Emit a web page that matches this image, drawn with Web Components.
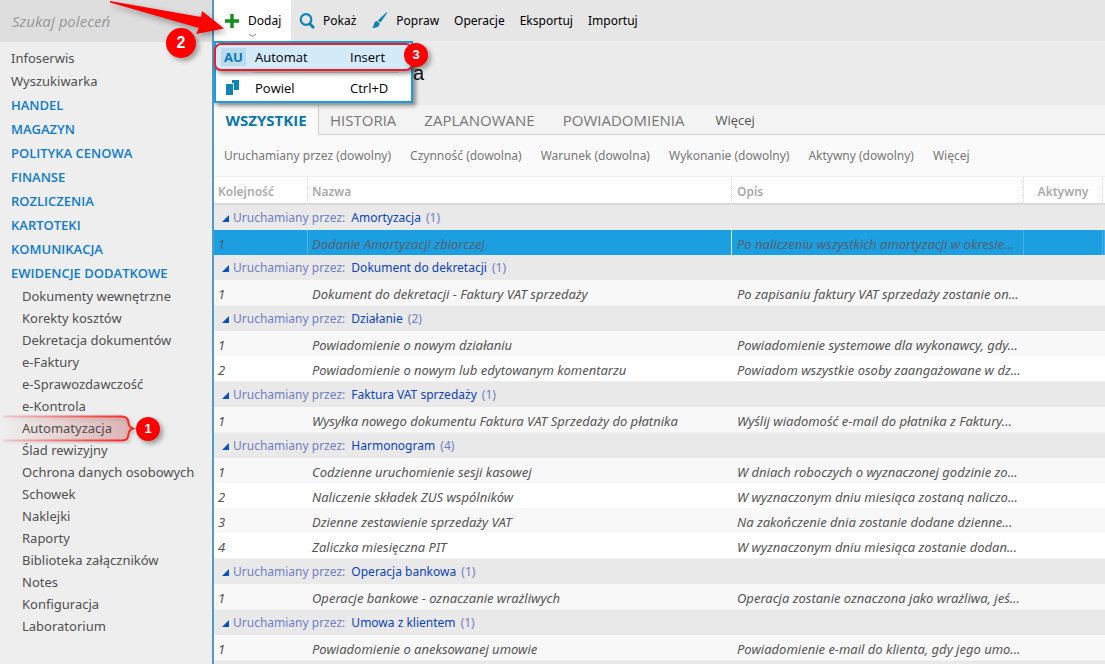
<!DOCTYPE html>
<html lang="pl">
<head>
<meta charset="utf-8">
<title>Automatyzacja</title>
<style>
html,body{margin:0;height:100%}
body{font:13px/20px "Noto Sans","Open Sans",sans-serif;color:#505050;overflow:hidden;background:#ececec}
</style>
</head>
<body>
<app-shell></app-shell>
<script>
class Base extends HTMLElement{
  constructor(){super();this.attachShadow({mode:'open'}).innerHTML=this.render();}
  render(){return '';}
}

customElements.define('step-badge',class extends Base{
  render(){return `<style>
  :host{display:flex;align-items:center;justify-content:center;position:absolute;z-index:6;width:24px;height:24px;border-radius:50%;background:#f00;color:#fff;font:bold 13px/14px "Liberation Sans",sans-serif;box-shadow:3px 3px 5px rgba(0,0,0,.35)}
  :host([large]){width:30px;height:30px;font-size:16px}
  </style><slot></slot>`;}
});

customElements.define('side-nav',class extends Base{
  render(){
    const link=(c,t)=>`<a class="${c}" href="#">${t}</a>`;
    const cats=['HANDEL','MAGAZYN','POLITYKA CENOWA','FINANSE','ROZLICZENIA','KARTOTEKI','KOMUNIKACJA','EWIDENCJE DODATKOWE'];
    const subs=['Dokumenty wewnętrzne','Korekty kosztów','Dekretacja dokumentów','e-Faktury','e-Sprawozdawczość','e-Kontrola','Automatyzacja','Ślad rewizyjny','Ochrona danych osobowych','Schowek','Naklejki','Raporty','Biblioteka załączników','Notes','Konfiguracja','Laboratorium'];
    return `<style>
    :host{display:block;background:#eee;border-right:2px solid #4f9bc9;overflow:hidden}
    input{display:block;box-sizing:border-box;width:100%;height:42px;border:0;border-radius:0;outline:0;padding:0 12px;background:#dedede;font:italic 15px/20px "Noto Sans",sans-serif}
    input::placeholder{color:#9b9b9b;opacity:1}
    nav{display:flex;flex-direction:column;padding-top:5px}
    a{text-decoration:none;white-space:nowrap;padding-left:11px;color:#505050}
    .top{line-height:23px}
    .cat{line-height:24px;font-family:"Open Sans",sans-serif;font-weight:600;color:#0e7bd0}
    .sub{line-height:22px;padding-left:22px}
    .marked{position:relative}
    .marked svg{position:absolute;left:0;top:-3px}
    .marked span{position:relative}
    .marked step-badge{left:136px;top:0}
    </style>
    <input type="text" placeholder="Szukaj poleceń" aria-label="Szukaj poleceń">
    <nav>${['Infoserwis','Wyszukiwarka'].map(t=>link('top',t)).join('')}${cats.map(t=>link('cat',t)).join('')}
    ${subs.map(t=>t==='Automatyzacja'?`<a class="sub marked" href="#"><svg width="140" height="30" aria-hidden="true">
      <defs><linearGradient id="f"><stop offset="0" stop-color="#f00" stop-opacity="0"/><stop offset="1" stop-color="#c00" stop-opacity=".2"/></linearGradient>
      <linearGradient id="s" gradientUnits="userSpaceOnUse" x1="0" x2="128" y1="0" y2="0"><stop offset="0" stop-color="#f33" stop-opacity=".15"/><stop offset="1" stop-color="#f22"/></linearGradient></defs>
      <path d="M3 2.500H122Q128.500 3 128.500 9Q129 13 133 14.500Q129 16 128.500 20Q128.500 26.500 122 26.500H3" fill="url(#f)" stroke="url(#s)" stroke-width="2" style="filter:drop-shadow(1px 2px 2px rgba(0,0,0,.3))"/></svg><span>${t}</span><step-badge>1</step-badge></a>`:link('sub',t)).join('')}
    </nav>`;}
});

customElements.define('add-menu',class extends Base{
  render(){return `<style>
    :host{display:block;box-sizing:border-box;width:199px;border:2px solid #1c9cdd;background:#fff;box-shadow:3px 3px 4px rgba(0,0,0,.4);color:#000}
    button{display:grid;grid-template-columns:39px 95px 1fr;align-items:center;width:100%;border:0;padding:0;background:none;text-align:left;color:inherit;font:13px/20px "Open Sans",sans-serif}
    .hot{height:28px;background:#d3eaf8}
    .copy{height:28px;padding-top:2px}
    .au{justify-self:start;margin-left:5px;padding:0 3px;background:#bcdcee;color:#0878bd;font-weight:700;line-height:18px}
    svg{margin-left:9px}
    .ring{position:absolute;left:-2px;right:-2px;top:0;height:28px;box-sizing:border-box;border:2px solid #ee1c24;border-radius:7px;box-shadow:2px 3px 4px rgba(0,0,0,.4);pointer-events:none}
    hr{border:0;border-top:1px solid #ddd;margin:1px 12px 0 38px}
    step-badge{left:188px;top:0}
  </style>
  <button class="hot" type="button"><span class="au">AU</span><span>Automat</span><span>Insert</span></button>
  <hr>
  <button class="copy" type="button"><svg width="16" height="18" viewBox="0 0 16 18" fill="#0c84b8"><path d="M7 1H14V11H9V4H7z"/><path d="M1 5H8V16H1z"/></svg><span>Powiel</span><span>Ctrl+D</span></button>
  <div class="ring"></div><step-badge>3</step-badge>`;}
});

customElements.define('tool-bar',class extends Base{
  render(){return `<style>
    :host{display:flex;height:41px;background:#e6e6e6;position:relative;z-index:3}
    button{display:flex;align-items:center;border:0;padding:0;background:none;color:#000;font:12px/20px "Noto Sans",sans-serif;white-space:nowrap}
    .add{position:relative;width:77px;padding-left:10px;gap:8px;background:#fff}
    .chev{position:absolute;left:34px;bottom:3px}
    .rest{display:flex;gap:15px;padding-left:8px}
    .rest button{gap:8px}
    add-menu{position:absolute;left:0;top:41px}
  </style>
  <button class="add" type="button"><svg width="16" height="16" viewBox="0 0 16 16"><path d="M8 1V15M1 8H15" stroke="#12901c" stroke-width="3.400"/></svg>Dodaj<svg class="chev" width="9" height="5" fill="none" stroke="#888"><path d="M1 1L4.500 3.500L8 1"/></svg></button>
  <div class="rest">
  <button type="button"><svg width="16" height="18" viewBox="0 0 16 18" fill="none" stroke="#0c84b8"><circle cx="7" cy="7.500" r="5.300" stroke-width="2.200"/><path d="M10.500 11.500L15 16" stroke-width="3"/></svg>Pokaż</button>
  <button type="button"><svg width="17" height="17" viewBox="0 0 17 17" fill="#0c84b8"><path d="M16.500 .5L9.500 10.500L7 8.200L15 .8Q16 0 16.500 .5z"/><path d="M6 9L8.700 11.500Q8.500 16 1 16Q3 14 3 11.800Q3.500 9.300 6 9z"/></svg>Popraw</button>
  <button type="button">Operacje</button><button type="button">Eksportuj</button><button type="button">Importuj</button></div>
  <add-menu></add-menu>`;}
});

customElements.define('view-tabs',class extends Base{
  render(){return `<style>
    :host{display:flex;height:30px;box-sizing:border-box;background:#f3f3f3;box-shadow:inset 0 -1px #cfcfcf}
    button{border:0;padding:0;background:none;color:#777;font:15px/29px "Open Sans",sans-serif;white-space:nowrap}
    .on{width:105px;box-sizing:border-box;background:#fafafa;border-right:1px solid #cfcfcf;color:#0d77ab;font-weight:700}
    .others{display:flex;gap:28px;padding-left:11px}
    .more{font-size:13px;color:#555;padding-left:3px}
  </style><button class="on" type="button">WSZYSTKIE</button><div class="others"><button type="button">HISTORIA</button><button type="button">ZAPLANOWANE</button><button type="button">POWIADOMIENIA</button><button type="button" class="more">Więcej</button></div>`;}
});

customElements.define('filter-bar',class extends Base{
  render(){return `<style>
    :host{display:flex;height:42px;gap:19px;padding-left:10px;background:#fafafa;box-sizing:border-box;border-bottom:1px solid #efefef}
    button{border:0;padding:0;background:none;color:#777;font:12px/20px "Noto Sans",sans-serif;white-space:nowrap}
  </style>${['Uruchamiany przez (dowolny)','Czynność (dowolna)','Warunek (dowolna)','Wykonanie (dowolny)','Aktywny (dowolny)','Więcej'].map(t=>`<button type="button">${t}</button>`).join('')}`;}
});

customElements.define('rule-table',class extends Base{
  render(){
    const data=[
      ['Amortyzacja',['Dodanie Amortyzacji zbiorczej','Po naliczeniu wszystkich amortyzacji w okresie...']],
      ['Dokument do dekretacji',['Dokument do dekretacji - Faktury VAT sprzedaży','Po zapisaniu faktury VAT sprzedaży zostanie on...']],
      ['Działanie',['Powiadomienie o nowym działaniu','Powiadomienie systemowe dla wykonawcy, gdy...'],['Powiadomienie o nowym lub edytowanym komentarzu','Powiadom wszystkie osoby zaangażowane w dz...']],
      ['Faktura VAT sprzedaży',['Wysyłka nowego dokumentu Faktura VAT Sprzedaży do płatnika','Wyślij wiadomość e-mail do płatnika z Faktury...']],
      ['Harmonogram',['Codzienne uruchomienie sesji kasowej','W dniach roboczych o wyznaczonej godzinie zo...'],['Naliczenie składek ZUS wspólników','W wyznaczonym dniu miesiąca zostaną naliczo...'],['Dzienne zestawienie sprzedaży VAT','Na zakończenie dnia zostanie dodane dzienne...'],['Zaliczka miesięczna PIT','W wyznaczonym dniu miesiąca zostanie dodan...']],
      ['Operacja bankowa',['Operacje bankowe - oznaczanie wrażliwych','Operacja zostanie oznaczona jako wrażliwa, jeś...']],
      ['Umowa z klientem',['Powiadomienie o aneksowanej umowie','Powiadomienie e-mail do klienta, gdy jego umo...']]];
    return `<style>
    :host{display:flex;flex-direction:column;flex:1;min-height:0;overflow:hidden;background:#fff}
    table{table-layout:fixed;width:100%;border-collapse:separate;border-spacing:0;font-size:13px;line-height:20px}
    th,td{padding:0 4px;text-align:left;white-space:nowrap;overflow:hidden;box-sizing:border-box}
    td:nth-child(3),th:nth-child(3){padding:0 0 0 5px}
    thead th,thead th:nth-child(3){height:28px;padding-top:3px;color:#aaa;font-size:12px;font-weight:600;border-right:1px dotted #ddd;border-bottom:2px solid #dadada}
    thead th:last-child,td:last-child{padding:0;border-right:0}
    thead th.act{text-align:center;padding:3px 0 0}
    .group th{height:25px;padding-left:8px;background:#e9e9e9;color:#6f80c4;font-size:12px;font-weight:400}
    .group b{font-weight:400;color:#0b42bd;margin:0 2px 0 3px}
    .group svg{margin-right:4px}
    tbody td,tbody td:nth-child(3){height:25px;padding-top:2px;font-style:italic;color:#555}
    tr.odd td{background:#f8f8f8}
    tr.last td{height:26px;border-bottom:1px solid #f0f0f0}
    tr.sel td{height:25px;background:#1c9fe1;color:#57606a;border-right:1px solid #49b1e7;border-bottom:0}
    tr.sel td:nth-child(2){border-right:1px solid #d8effb}
    .rest{flex:1;background:#e9e9e9}
    </style><table><colgroup><col style="width:94px"><col><col style="width:292px"><col style="width:79px"><col style="width:2px"></colgroup>
    <thead><tr><th scope="col">Kolejność</th><th scope="col">Nazwa</th><th scope="col">Opis</th><th scope="col" class="act">Aktywny</th><th></th></tr></thead>
    ${data.map(([g,...rows],gi)=>`<tbody><tr class="group"><th colspan="5" scope="rowgroup"><svg width="7" height="7" viewBox="0 0 7 7"><path d="M7 0V7H0z" fill="#0b4fc4"/></svg>Uruchamiany przez: <b>${g}</b> (${rows.length})</th></tr>${rows.map((r,i)=>`<tr class="${i%2?'':'odd'} ${i===rows.length-1?'last':''} ${gi?'':'sel'}"><td>${i+1}</td><td>${r[0]}</td><td>${r[1]}</td><td></td><td></td></tr>`).join('')}</tbody>`).join('')}
    </table><div class="rest"></div>`;}
});

customElements.define('app-shell',class extends Base{
  render(){return `<style>
    :host{display:grid;grid-template-columns:214px minmax(0,1fr);height:100vh;overflow:hidden;position:relative}
    main{display:flex;flex-direction:column;min-width:0;min-height:0}
    h1{margin:0;box-sizing:border-box;height:64px;padding:21px 0 0 199px;background:#ececec;color:#111;font:20px/22px "Liberation Sans",sans-serif}
    .arrow{position:absolute;left:105px;top:0;z-index:5;pointer-events:none;filter:drop-shadow(2px 3px 3px rgba(0,0,0,.35))}
    .two{left:166px;top:28px}
  </style>
  <side-nav></side-nav>
  <main><tool-bar></tool-bar><h1>a</h1><view-tabs></view-tabs><filter-bar></filter-bar><rule-table></rule-table></main>
  <svg class="arrow" width="125" height="44" fill="#f00" aria-hidden="true"><path d="M5 1L96 17L97 11L119 28.500L91 34L94 28L5 2.500z"/></svg>
  <step-badge class="two" large>2</step-badge>`;}
});
</script>
</body>
</html>
